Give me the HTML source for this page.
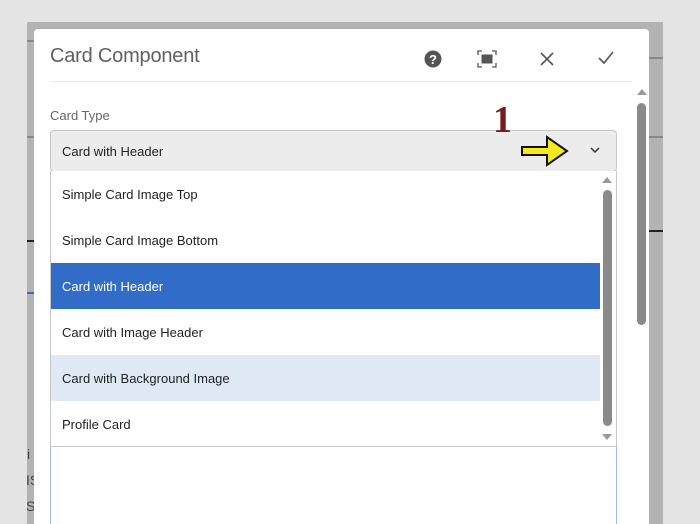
<!DOCTYPE html>
<html style="width:700px;height:524px;overflow:hidden"><head><style>
*{margin:0;padding:0;box-sizing:border-box}
body{width:700px;height:524px;background:#e4e4e4;position:relative;overflow:hidden;font-family:"Liberation Sans",sans-serif}
.abs{position:absolute}
.item{position:absolute;left:51px;width:549px;height:46px;font-size:13px;color:#222;padding-left:11px;line-height:48px}
</style></head><body>
<div class="abs" style="left:27px;top:22px;width:636px;height:502px;background:#b3b3b3"></div>
<div class="abs" style="left:27px;top:40px;width:8px;height:2px;background:#888"></div>
<div class="abs" style="left:27px;top:136px;width:8px;height:2px;background:#888"></div>
<div class="abs" style="left:27px;top:240px;width:8px;height:2px;background:#222"></div>
<div class="abs" style="left:27px;top:292px;width:8px;height:2px;background:#3b6fb5"></div>
<div class="abs" style="left:648px;top:57px;width:15px;height:2px;background:#888"></div>
<div class="abs" style="left:648px;top:136px;width:15px;height:2px;background:#888"></div>
<div class="abs" style="left:648px;top:230px;width:15px;height:2px;background:#222"></div>
<div class="abs" style="left:27px;top:446px;font-size:14px;color:#444">i</div>
<div class="abs" style="left:26px;top:472px;font-size:14px;color:#444">IS</div>
<div class="abs" style="left:26px;top:498px;font-size:14px;color:#444">S</div>
<div class="abs" style="left:34px;top:29px;width:615px;height:495px;background:#fff;border-radius:4px 4px 0 0"></div>
<div class="abs" style="left:50px;top:45px;font-size:20px;color:#606060;letter-spacing:-0.2px">Card Component</div>
<div class="abs" style="left:50px;top:81px;width:582px;height:1px;background:#e8e8e8"></div>
<svg class="abs" style="left:424px;top:50px" width="18" height="18" viewBox="0 0 18 18"><circle cx="9" cy="9" r="8.5" fill="#555"/><text x="9" y="14" font-size="13" font-weight="bold" fill="#fff" text-anchor="middle" font-family="Liberation Sans">?</text></svg>
<svg class="abs" style="left:477px;top:50px" width="20" height="18" viewBox="0 0 20 18"><path d="M1 5V1h4M15 1h4v4M19 13v4h-4M5 17H1v-4" stroke="#555" stroke-width="1.3" fill="none"/><rect x="4.5" y="4.5" width="11" height="9" fill="#555"/></svg>
<svg class="abs" style="left:540px;top:52px" width="14" height="14"><path d="M1 1L13 13M13 1L1 13" stroke="#555" stroke-width="1.6"/></svg>
<svg class="abs" style="left:598px;top:51px" width="16" height="14"><path d="M1 7L6 12L15 1" stroke="#555" stroke-width="1.6" fill="none"/></svg>
<svg class="abs" style="left:636px;top:88px" width="12" height="8"><path d="M1 7L6 1L11 7Z" fill="#999"/></svg>
<div class="abs" style="left:637px;top:103px;width:9px;height:222px;background:#8a8a8a;border-radius:5px"></div>
<div class="abs" style="left:50px;top:108px;font-size:13px;color:#666">Card Type</div>
<div class="abs" style="left:50px;top:130px;width:567px;height:42px;background:#ececec;border:1px solid #c8c8c8;border-radius:4px"></div>
<div class="abs" style="left:62px;top:144px;font-size:13px;color:#222">Card with Header</div>
<svg class="abs" style="left:590px;top:147px" width="10" height="7"><path d="M1 1L5 5L9 1" stroke="#333" stroke-width="1.5" fill="none"/></svg>
<div class="abs" style="left:493px;top:98px;font-size:38px;font-weight:bold;color:#7a1b1b;font-family:'Liberation Serif',serif">1</div>
<svg class="abs" style="left:520px;top:135px" width="50" height="32"><path d="M2 12H27V2L47 16L27 30V20H2Z" fill="#f4ea1c" stroke="#111" stroke-width="2"/></svg>
<div class="abs" style="left:50px;top:171px;width:567px;height:276px;background:#fff;border:1px solid #c8c8c8;border-top:none"></div>
<div class="item" style="top:171px">Simple Card Image Top</div>
<div class="item" style="top:217px">Simple Card Image Bottom</div>
<div class="item" style="top:263px;background:#316dc8;color:#fff">Card with Header</div>
<div class="item" style="top:309px">Card with Image Header</div>
<div class="item" style="top:355px;background:#dfe8f5">Card with Background Image</div>
<div class="item" style="top:401px">Profile Card</div>
<svg class="abs" style="left:601px;top:176px" width="12" height="8"><path d="M1 7L6 1L11 7Z" fill="#999"/></svg>
<div class="abs" style="left:603px;top:190px;width:9px;height:236px;background:#8a8a8a;border-radius:5px"></div>
<svg class="abs" style="left:601px;top:433px" width="12" height="8"><path d="M1 1L6 7L11 1Z" fill="#999"/></svg>
<div class="abs" style="left:50px;top:446px;width:567px;height:78px;border:1px solid #9fbfe6;border-top:1px solid #c8c8c8;border-bottom:none"></div>
</body></html>
